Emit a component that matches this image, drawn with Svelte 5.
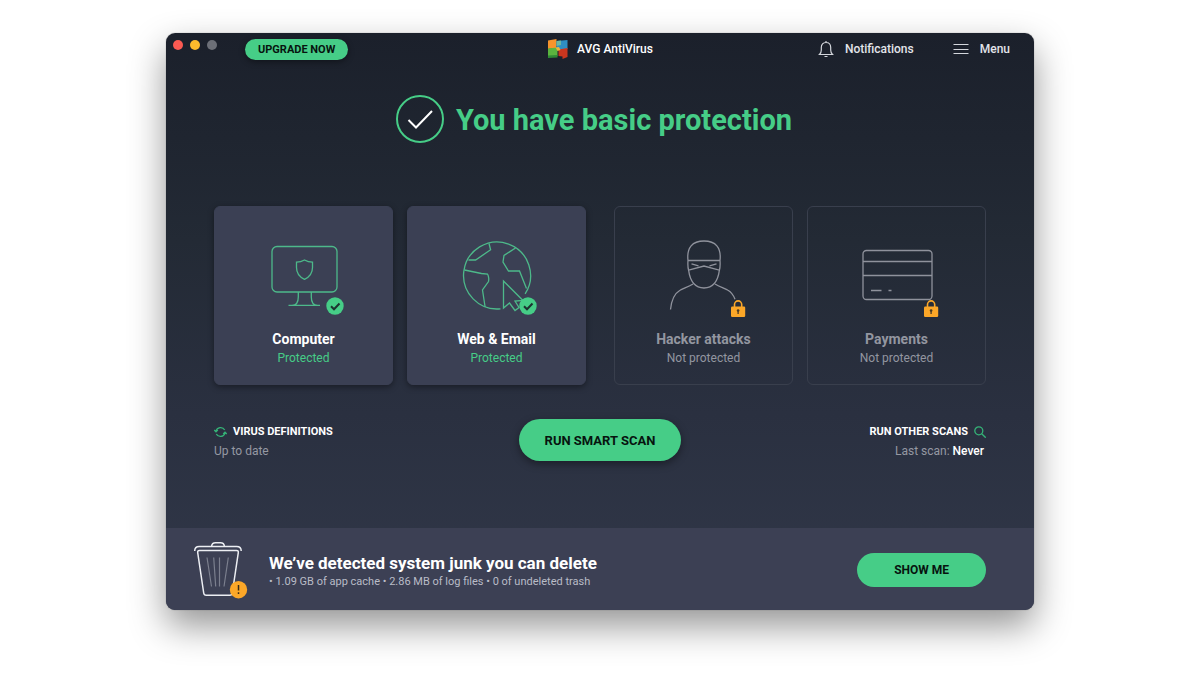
<script>
  const groups = [
    [
      { id: "computer", title: "Computer", active: true },
      { id: "web", title: "Web & Email", active: true },
    ],
    [
      { id: "hacker", title: "Hacker attacks", active: false },
      { id: "payments", title: "Payments", active: false },
    ],
  ];

  const junk = [
    "1.09 GB of app cache",
    "2.86 MB of log files",
    "0 of undeleted trash",
  ];
</script>

<div class="desktop">
  <div class="window">
    <header class="titlebar">
      <div class="titlebar-left">
        <div class="lights">
          <button class="light close" aria-label="Close"></button>
          <button class="light minimize" aria-label="Minimize"></button>
          <button class="light zoom" aria-label="Zoom"></button>
        </div>
        <button class="pill upgrade">UPGRADE NOW</button>
      </div>

      <div class="brand">
        <svg width="22" height="22" viewBox="0 0 22 22" aria-hidden="true">
          <path d="M1 2.500 9.500 1v9L1 11z" fill="#f7942c" />
          <path d="M1 10.500 10.500 9.500V18L1 18.500z" fill="#5bb43f" />
          <path d="M1 17.500l9.500-.5v2.500L1 20z" fill="#2f8a35" />
          <path d="M9.500 3 20.500 2v9l-8 1.500-3-1z" fill="#2f8fc4" />
          <path d="M9.500 3 14 2.500V7l-4.500 1z" fill="#6cb7a0" />
          <path d="M11.500 11.500 20.500 10v9l-5 2v-2.500l-4-.5z" fill="#c9361f" />
          <path d="M8.500 9.500l3.500-.5 1.500 3-3 1z" fill="#e9b53a" />
        </svg>
        <span>AVG AntiVirus</span>
      </div>

      <nav class="titlebar-right">
        <button class="nav-button">
          <svg width="16" height="18" viewBox="0 0 16 18" aria-hidden="true">
            <path
              d="M1.500 14.500h13c-1.300-1.200-1.800-2.500-1.800-4.500V7.500C12.700 4.500 11 2.500 8 2.500S3.300 4.500 3.300 7.500V10c0 2-.5 3.300-1.800 4.500zM8 2.500V1M6.500 16.500h3"
            />
          </svg>
          Notifications
        </button>
        <button class="nav-button">
          <svg width="16" height="18" viewBox="0 0 16 18" aria-hidden="true">
            <path d="M.5 4.500h15M.5 9.500h15M.5 13.500h15" />
          </svg>
          Menu
        </button>
      </nav>
    </header>

    <main>
      <div class="hero">
        <svg width="48" height="48" viewBox="0 0 48 48" aria-hidden="true">
          <circle cx="24" cy="24" r="23" fill="none" stroke="#46cd87" stroke-width="2" />
          <path d="M12.500 25 20 32.500 36 16" fill="none" stroke="#fff" stroke-width="2" />
        </svg>
        <h1>You have basic protection</h1>
      </div>

      <div class="cards">
        {#each groups as group}
          <div class="group">
            {#each group as card (card.id)}
              <button class="card" class:active={card.active}>
                <svg class="art" width="96" height="84" viewBox="0 0 96 84" aria-hidden="true">
                  {#if card.id === "computer"}
                    <rect x="16" y="10.500" width="65" height="45.500" rx="5" />
                    <path d="M42.300 56v5c0 5-2 8.300-6.300 8.300M55.300 56v5c0 5 2 8.300 6.300 8.300M32.500 69.300H64" />
                    <path d="M48.500 24c2.500 1.500 5 2.200 8 2.200v5.300c0 5.500-3 9.500-8 11.800-5-2.300-8-6.300-8-11.800v-5.300c3 0 5.500-.7 8-2.200z" />
                  {:else if card.id === "web"}
                    <path d="M51.500 72.800A33.500 33.500 0 1 1 76.100 57.800" />
                    <path d="M40 7.500l1.600 6.300L26.600 24H19.500M15.500 34l17 3.500 6 .5c1.500 2.500 1.500 5 1 7.500L33.500 54l2.600 17" />
                    <path d="M66.500 12 55 19.500 54 26l5.500 9h11l7 17.500" />
                    <path d="M54.500 45v27l6-5 5.500 7.500 4-3-4-6.500 8-.5z" />
                  {:else if card.id === "hacker"}
                    <path d="M32 24.500c-1.500-13 4.500-19.500 16-19.500s17.500 6.500 16 19.500M32 24.500h32M32 24.500c-.3 4-.2 7 .6 9.700M64 24.500c.3 4 .2 7-.6 9.700" />
                    <path d="M32.600 34.200 48 30l15.400 4.200C62 44.500 57.500 52 48 52S34 44.500 32.600 34.200zM35.500 27.800l7 2M60.500 27.800l-7 2" />
                    <path d="M37 48c-5 3-9.500 4-13 6.200-6 3.500-8.500 9.500-9.500 19.300M59 48c5 3 9.500 4 13 6.200 3.500 2 5.500 5 7 9" />
                  {:else}
                    <rect x="14" y="14.500" width="69" height="49" rx="3.500" />
                    <path d="M14 25.500h69M14 39.500h69M22 54.500h10.500M39.500 54.500h3" />
                  {/if}

                  {#if card.active}
                    <g class="badge">
                      <circle cx="79" cy="70" r="8.700" fill="#46cd87" />
                      <path d="M75 70.300l3 3 5.500-5.800" stroke="#1d3330" stroke-width="2" />
                    </g>
                  {:else}
                    <g class="badge">
                      <path d="M78.500 71v-2.500a3.600 3.600 0 0 1 7.200 0V71" stroke="#fca728" stroke-width="1.600" />
                      <rect x="75" y="70.500" width="14.200" height="10.500" rx="1.200" fill="#fca728" />
                      <circle cx="82.100" cy="74.500" r="1.300" fill="#4a3a24" />
                      <path d="M82.100 75v3" stroke="#4a3a24" stroke-width="1.300" />
                    </g>
                  {/if}
                </svg>
                <span class="card-title">{card.title}</span>
                <span class="card-status">{card.active ? "Protected" : "Not protected"}</span>
              </button>
            {/each}
          </div>
        {/each}
      </div>

      <div class="actions">
        <div class="info">
          <button class="link">
            <svg width="13" height="12" viewBox="0 0 13 12" aria-hidden="true">
              <path d="M2 5.200A4.700 4.700 0 0 1 10.700 4M11 6.800A4.700 4.700 0 0 1 2.300 8M.3 4l1.700 1.800L3.800 4M9.200 8 11 6.200 12.700 8" />
            </svg>
            VIRUS DEFINITIONS
          </button>
          <p>Up to date</p>
        </div>

        <button class="pill scan">RUN SMART SCAN</button>

        <div class="info right">
          <button class="link">
            RUN OTHER SCANS
            <svg width="12" height="12" viewBox="0 0 12 12" aria-hidden="true">
              <circle cx="4.800" cy="4.800" r="4" />
              <path d="M7.700 7.700l4 4" />
            </svg>
          </button>
          <p>Last scan: <b>Never</b></p>
        </div>
      </div>
    </main>

    <footer>
      <svg class="trash" width="60" height="64" viewBox="0 0 60 64" aria-hidden="true">
        <path d="M4.700 13c0-3 1.500-4.500 4.500-4.500h37.500c3 0 4.500 1.500 4.500 4.500M21.500 8.500c.3-2.700 1.500-3.800 4-3.800h5c2.500 0 3.700 1.100 4 3.800" />
        <path d="M9.500 12.500h37c1.500 0 2 .8 1.800 2.200l-6 40.300c-.2 1.600-1 2.300-2.600 2.300H16.300c-1.600 0-2.400-.7-2.600-2.300l-6-40.300c-.2-1.400.3-2.200 1.800-2.200z" />
        <path class="rib" d="M17 19.500l4.500 29M23.700 19.500l2 29M29.500 19.500v29M38.300 19.500l-4.300 29" />
        <circle class="alert" cx="48.500" cy="51.700" r="8.700" />
        <path class="mark" d="M48.500 47v5.500M48.500 54.200v1.800" />
      </svg>
      <div class="junk">
        <h2>We’ve detected system junk you can delete</h2>
        <p>{junk.map((item) => `• ${item}`).join(" ")}</p>
      </div>
      <button class="pill show">SHOW ME</button>
    </footer>
  </div>
</div>

<style>
  :global(body) {
    margin: 0;
    background: #fff;
    font-family: Roboto, "Liberation Sans", sans-serif;
  }

  button {
    border: 0;
    padding: 0;
    background: none;
    color: inherit;
    font: inherit;
    cursor: pointer;
  }

  h1,
  h2,
  p {
    margin: 0;
  }

  .desktop {
    padding: 33px 166px 64px;
    overflow: hidden;
  }

  .window {
    border-radius: 9px;
    overflow: hidden;
    color: #fff;
    background: linear-gradient(#1b202b, #232a35 36%, #2a3040 66%, #313849);
    box-shadow:
      0 0 1px rgba(0, 0, 0, 0.5),
      0 16px 36px rgba(0, 0, 0, 0.42);
  }

  .titlebar {
    display: grid;
    grid-template-columns: 1fr auto 1fr;
    align-items: center;
    height: 32px;
    padding: 0 7px;
    font-size: 12px;
    font-weight: 500;
  }

  .titlebar-left,
  .titlebar-right,
  .lights,
  .brand,
  .nav-button {
    display: flex;
    align-items: center;
  }

  .titlebar-left {
    gap: 28px;
  }

  .lights {
    gap: 7px;
    padding-bottom: 8px;
  }

  .light {
    width: 10px;
    height: 10px;
    border-radius: 50%;
  }

  .close {
    background: #fb5a52;
  }

  .minimize {
    background: #fcb92c;
  }

  .zoom {
    background: #6c6f77;
  }

  .pill {
    border-radius: 40px;
    background: #46cd87;
    color: #07140f;
    font-weight: 700;
    font-size: 12px;
    text-align: center;
  }

  .upgrade {
    height: 21px;
    padding: 0 13px;
    font-size: 11px;
    box-shadow: 0 2px 6px rgba(0, 0, 0, 0.4);
  }

  .brand {
    gap: 8px;
  }

  .titlebar-right {
    justify-content: flex-end;
    gap: 39px;
    padding-right: 17px;
  }

  .nav-button {
    gap: 11px;
    color: #e3e5ea;
  }

  .nav-button svg {
    fill: none;
    stroke: #d3d6dc;
    stroke-width: 1.2;
  }

  main {
    padding: 30px 48px 67px;
  }

  .hero {
    display: flex;
    justify-content: center;
    align-items: center;
    gap: 12px;
    padding-right: 12px;
  }

  h1 {
    padding-top: 2px;
    color: #46cd87;
    font-size: 29px;
    line-height: 46px;
    font-weight: 700;
  }

  .cards {
    display: flex;
    gap: 28px;
    margin-top: 63px;
  }

  .group {
    display: flex;
    flex: 1;
    gap: 14px;
  }

  .card {
    flex: 1;
    display: flex;
    flex-direction: column;
    align-items: center;
    box-sizing: border-box;
    padding: 29px 0 16px;
    border: 1px solid #393f4d;
    border-radius: 6px;
    color: #9396a0;
  }

  .card.active {
    border-color: #3b4054;
    background: #3b4054;
    color: #fff;
    box-shadow: 0 2px 6px rgba(0, 0, 0, 0.4);
  }

  .art {
    fill: none;
    stroke: #8f929c;
    stroke-width: 1.3;
  }

  .active .art {
    stroke: #4db98a;
  }

  .badge {
    stroke: none;
  }

  .card-title {
    margin-top: 9px;
    font-size: 14px;
    line-height: 20px;
    font-weight: 700;
  }

  .card-status {
    font-size: 12px;
    line-height: 19px;
  }

  .active .card-status {
    color: #46cd87;
  }

  .actions {
    display: grid;
    grid-template-columns: 1fr auto 1fr;
    align-items: start;
    margin-top: 34px;
  }

  .info {
    padding-top: 3px;
  }

  .info p {
    color: #9598a2;
    font-size: 12px;
    line-height: 18px;
  }

  .info b {
    color: #fff;
    font-weight: 500;
  }

  .right {
    display: flex;
    flex-direction: column;
    align-items: flex-end;
  }

  .right p {
    padding-right: 2px;
  }

  .link {
    display: flex;
    align-items: center;
    gap: 6px;
    font-size: 11px;
    line-height: 20px;
    font-weight: 700;
  }

  .link svg {
    fill: none;
    stroke: #35b377;
    stroke-width: 1.3;
  }

  .scan {
    height: 42px;
    padding: 0 26px;
    font-size: 13px;
    box-shadow: 0 3px 8px rgba(0, 0, 0, 0.4);
  }

  footer {
    display: flex;
    align-items: center;
    gap: 19px;
    padding: 10px 48px 8px 24px;
    background: #3c4054;
  }

  .trash {
    flex: none;
    fill: none;
    stroke: #eceef3;
    stroke-width: 1.5;
  }

  .rib {
    stroke: #7b7f8e;
    stroke-width: 1.2;
  }

  .alert {
    fill: #fca728;
    stroke: none;
  }

  .mark {
    stroke: #3a2c18;
  }

  .junk {
    flex: 1;
    padding-top: 2px;
  }

  h2 {
    font-size: 17px;
    line-height: 20px;
    font-weight: 700;
  }

  .junk p {
    color: #b9bcc7;
    font-size: 11px;
    line-height: 17px;
  }

  .show {
    height: 34px;
    padding: 0 37px;
  }
</style>
